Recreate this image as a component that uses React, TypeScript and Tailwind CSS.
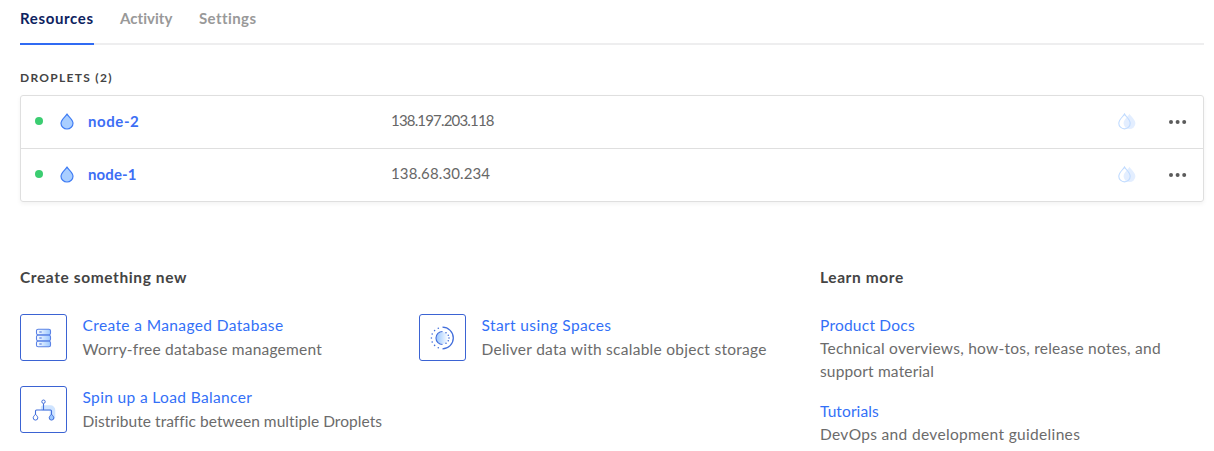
import React from "react";

function Drop() {
  return (
    <svg width="14" height="17" viewBox="0 0 14 17" className="mb-[2px] shrink-0">
      <path d="M7 1C5.9 3.3 1 6.6 1 10.2A6 5.8 0 0 0 13 10.2C13 6.6 8.1 3.3 7 1Z" fill="#a9ceff" stroke="#3f7cf4" strokeWidth="1.2" strokeLinejoin="round" />
    </svg>
  );
}

function PaleDrops() {
  return (
    <svg width="18" height="17" viewBox="0 0 18 17" className="shrink-0">
      <path d="M11.5.8C10.4 3 5.6 6.5 5.6 10.3A5.9 5.8 0 0 0 17.4 10.3C17.4 6.5 12.6 3 11.5.8Z" fill="#e3eeff" />
      <path d="M6.5 1C5.4 3.3 .8 6.6 .8 10.2A5.7 5.7 0 0 0 12.2 10.2C12.2 6.6 7.6 3.3 6.5 1Z" fill="none" stroke="#c0dbff" strokeWidth="1.1" />
    </svg>
  );
}

function DatabaseIcon() {
  return (
    <svg width="17" height="20" viewBox="0 0 17 20">
      <defs>
        <linearGradient id="db"><stop offset="0" stopColor="#fff" /><stop offset="1" stopColor="#9cc8ff" /></linearGradient>
      </defs>
      {[1, 7, 13].map((y) => (
        <g key={y}>
          <rect x="1.5" y={y + 0.2} width="14" height="5.6" rx="1.6" fill="url(#db)" stroke="#5a82e6" strokeWidth="1.1" />
          <path d={`M4.3 ${y + 3}h2.4`} stroke="#426edb" strokeWidth="1" />
        </g>
      ))}
    </svg>
  );
}

function SpacesIcon() {
  return (
    <svg width="25" height="24" viewBox="0 0 25 24" fill="none" stroke="#426edb">
      <defs>
        <linearGradient id="sp"><stop offset="0" stopColor="#9cc8ff" /><stop offset="1" stopColor="#fff" /></linearGradient>
      </defs>
      <circle cx="12.500" cy="12" r="6" fill="url(#sp)" stroke="none" />
      <path d="M12.500 5.500a6.500 6.500 0 0 0 0 13" strokeWidth="1.200" />
      <path d="M12.500 1.200a10.800 10.800 0 0 1 0 21.600" strokeWidth="1.300" />
      <g fill="#426edb" stroke="none">
        <circle cx="8.3" cy="2.2" r=".8" /><circle cx="4.6" cy="4.6" r=".8" /><circle cx="2.200" cy="8" r=".8" /><circle cx="1.400" cy="12" r=".8" />
        <circle cx="2.200" cy="16" r=".8" /><circle cx="4.6" cy="19.4" r=".8" /><circle cx="8.3" cy="21.8" r=".8" />
        <circle cx="16" cy="6.800" r=".8" /><circle cx="18.300" cy="9.200" r=".8" /><circle cx="19" cy="12" r=".8" /><circle cx="18.300" cy="14.800" r=".8" /><circle cx="16" cy="17.200" r=".8" />
      </g>
    </svg>
  );
}

function BalancerIcon() {
  return (
    <svg width="25" height="22" viewBox="0 0 25 22" fill="none" stroke="#426edb">
      <path d="M12.500 9h7a2 2 0 0 1 2 2v7" stroke="#cfe4ff" strokeWidth="5.500" strokeLinejoin="round" strokeLinecap="round" />
      <path d="M12.500 4.500v6.500M4.500 16v-4q0-1 1-1h14q1 0 1 1v4" strokeWidth="1.100" />
      <circle cx="12.500" cy="2.700" r="1.700" fill="#fff" />
      <path d="M4.500 15.200C4 16.200 2.200 17.200 2.200 18.800a2.300 2.300 0 0 0 4.600 0C6.800 17.200 5 16.200 4.500 15.200Z" fill="#fff" />
      <path d="M20.500 15.200C20 16.200 18.200 17.200 18.200 18.800a2.300 2.300 0 0 0 4.600 0C22.800 17.200 21 16.200 20.500 15.200Z" fill="#9cc8ff" />
    </svg>
  );
}

function Row({ name, ip, nameClass, ipClass, last }: { name: string; ip: string; nameClass: string; ipClass: string; last?: boolean }) {
  return (
    <div className={`flex items-center ${last ? "h-[52px]" : "h-[53px] border-b border-[#dfdfdf]"}`}>
      <span className="mb-[2px] ml-[14px] mr-[17px] h-2 w-2 rounded-full bg-[#3bcd71]" />
      <Drop />
      <span className={`mb-[2px] ml-[14px] w-[302px] text-[15px] font-bold text-[#3d6ef5] ${nameClass}`}>{name}</span>
      <span className={`mb-[3px] ml-px flex-1 text-[15px] text-[#676767] ${ipClass}`}>{ip}</span>
      <span className="mb-[2px] mr-[33px]"><PaleDrops /></span>
      <svg width="18" height="4" viewBox="0 0 18 4" className="mr-[16px]" fill="#5b5b5b">
        <circle cx="2" cy="2" r="2" /><circle cx="8.600" cy="2" r="2" /><circle cx="15.200" cy="2" r="2" />
      </svg>
    </div>
  );
}

function Card({ icon, title, text, titleClass, textClass }: { icon: React.ReactNode; title: string; text: string; titleClass: string; textClass: string }) {
  return (
    <div className="flex h-[72px]">
      <div className="flex h-[47px] w-[47px] shrink-0 items-center justify-center rounded-[3px] border border-[#3b63d3]">{icon}</div>
      <div className="-mt-px ml-[15.500px] whitespace-nowrap text-[15.500px] leading-6">
        <div className={`text-[#3370f7] ${titleClass}`}>{title}</div>
        <div className={`text-[#6b6b6b] ${textClass}`}>{text}</div>
      </div>
    </div>
  );
}

export default function App() {
  return (
    <div className="h-[451px] overflow-hidden bg-white pl-5 pr-[10px] font-['Lato',sans-serif] text-[15px]">
      <nav className="flex h-[45px] gap-[26px] border-b-2 border-[#eeeeef] font-bold leading-[37px] text-[#999]">
        <span className="h-[45px] w-[74px] shrink-0 whitespace-nowrap border-b-2 border-[#306bf3] tracking-[0.65px] text-[#0d2260]">Resources</span>
        <span className="w-[53px] tracking-[0.05px]">Activity</span>
        <span className="tracking-[0.42px]">Settings</span>
      </nav>
      <h2 className="mt-[24px] h-[26px] text-[12px] font-bold leading-[18px] tracking-[1.3px] text-[#444]">DROPLETS (2)</h2>
      <section className="h-[107px] rounded-[3px] border border-[#dfdfdf] shadow-[0_2px_4px_rgba(0,0,0,0.05)]">
        <Row name="node-2" ip="138.197.203.118" nameClass="tracking-[0.58px]" ipClass="tracking-[-0.82px]" />
        <Row name="node-1" ip="138.68.30.234" nameClass="tracking-[0.1px]" ipClass="tracking-[0.12px]" last />
      </section>
      <main className="mt-[63px] flex">
        <section className="w-[800px] shrink-0">
          <h3 className="h-[49px] text-[15.500px] font-bold leading-6 tracking-[0.6px] text-[#444]">Create something new</h3>
          <div className="grid grid-cols-[399px_401px]">
            <Card icon={<DatabaseIcon />} title="Create a Managed Database" text="Worry-free database management" titleClass="tracking-[0.38px]" textClass="tracking-[0.22px]" />
            <Card icon={<SpacesIcon />} title="Start using Spaces" text="Deliver data with scalable object storage" titleClass="tracking-[0.38px]" textClass="tracking-[0.27px]" />
            <Card icon={<BalancerIcon />} title="Spin up a Load Balancer" text="Distribute traffic between multiple Droplets" titleClass="tracking-[0.36px]" textClass="tracking-[0.05px]" />
          </div>
        </section>
        <section className="whitespace-nowrap text-[15.500px] leading-[23px] text-[#6b6b6b]">
          <h3 className="h-[49px] font-bold leading-6 tracking-[0.6px] text-[#444]">Learn more</h3>
          <div className="tracking-[0.23px] text-[#3370f7]">Product Docs</div>
          <div className="tracking-[0.25px]">Technical overviews, how-tos, release notes, and</div>
          <div className="tracking-[0.16px]">support material</div>
          <div className="mt-[17px] tracking-[0.1px] text-[#3370f7]">Tutorials</div>
          <div className="tracking-[0.33px]">DevOps and development guidelines</div>
        </section>
      </main>
    </div>
  );
}
